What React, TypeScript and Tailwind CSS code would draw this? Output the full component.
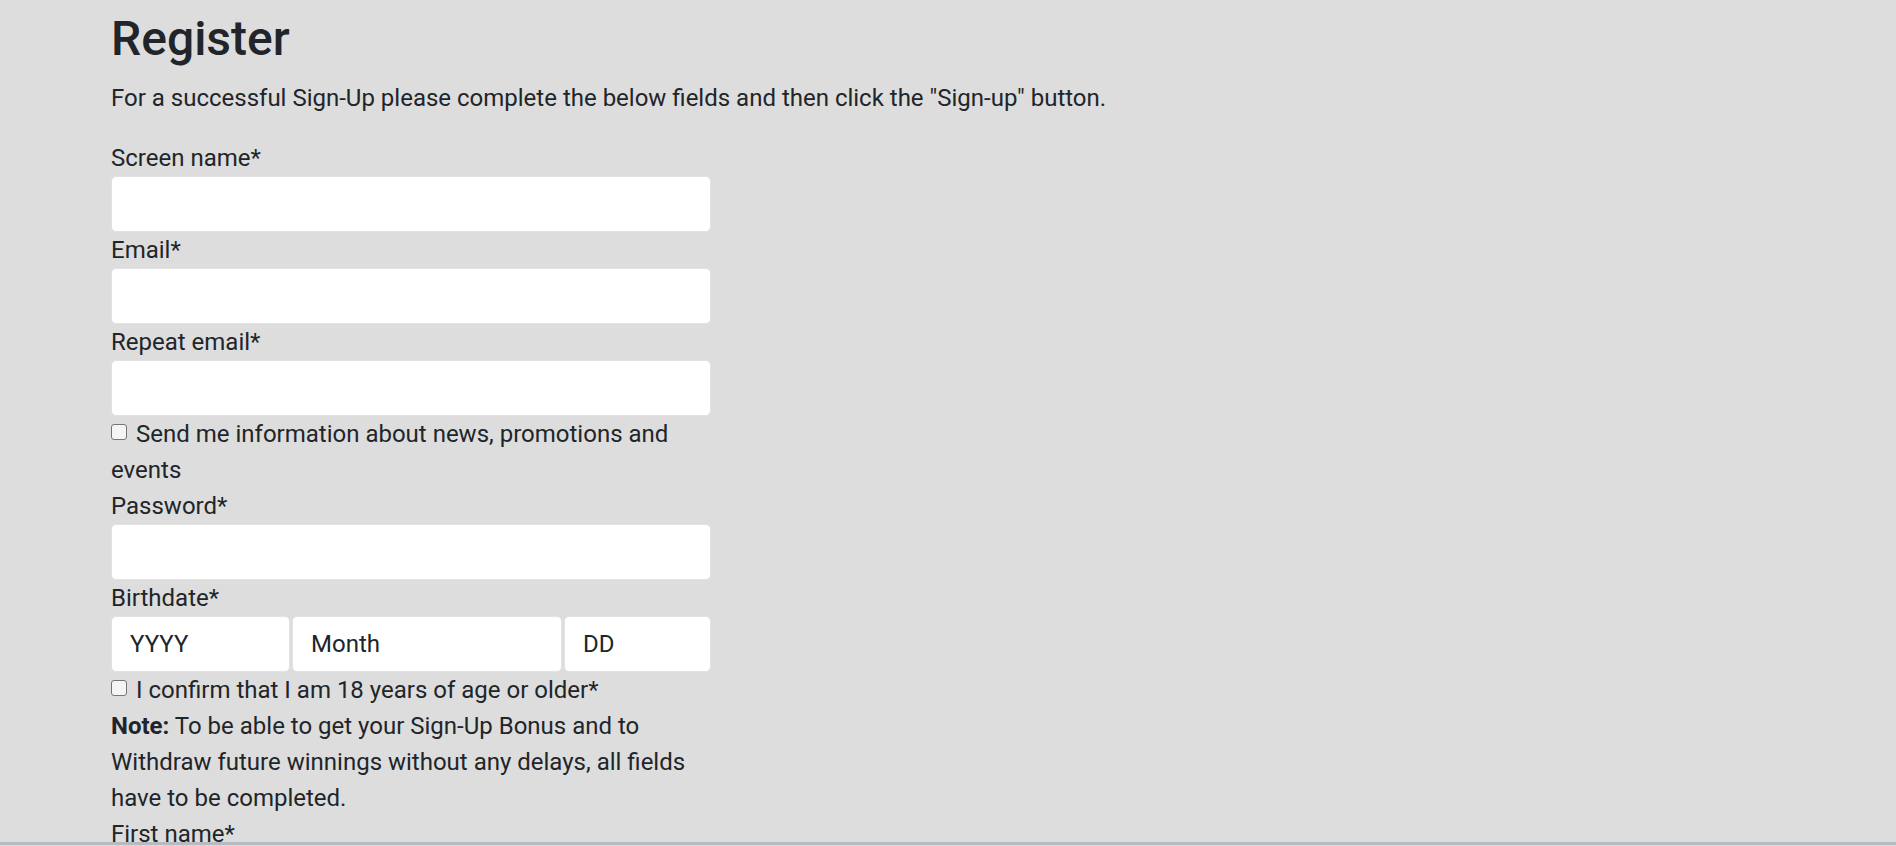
const font = { fontFamily: 'Roboto, "Liberation Sans", sans-serif' }

function Field({ label }: { label: string }) {
  return (
    <div>
      <label className="block leading-[36px]">{label}</label>
      <input
        type="text"
        className="block h-[56px] w-full rounded-[5px] border border-[#e2e2e2] bg-white px-[18px] outline-none"
      />
    </div>
  )
}

function Check({ children }: { children: React.ReactNode }) {
  return (
    <label className="block leading-[36px]">
      <span className="mr-[9px] inline-block h-[16px] w-[16px] rounded-[3px] border border-[#767676] bg-[#f5f5f5] align-[2px]" />
      {children}
    </label>
  )
}

export default function App() {
  return (
    <div style={font} className="relative h-[846px] overflow-hidden bg-[#dddddd] text-[24px] text-[#212529]">
      <div className="pl-[111px] pt-[10px]">
        <h1 className="text-[48px] font-medium leading-[57px]">Register</h1>
        <p className="mt-[13px] leading-[36px]">
          For a successful Sign-Up please complete the below fields and then click the "Sign-up" button.
        </p>
        <form className="mt-[24px] w-[600px]">
          <Field label="Screen name*" />
          <Field label="Email*" />
          <Field label="Repeat email*" />
          <Check>Send me information about news, promotions and events</Check>
          <Field label="Password*" />
          <div>
            <label className="block leading-[36px]">Birthdate*</label>
            <div className="flex gap-[2px]">
              <input
                placeholder="YYYY"
                className="h-[56px] w-[179px] rounded-[5px] border border-[#e2e2e2] bg-white px-[18px] placeholder-[#212529] outline-none"
              />
              <input
                placeholder="Month"
                className="h-[56px] w-[270px] rounded-[5px] border border-[#e2e2e2] bg-white px-[18px] placeholder-[#212529] outline-none"
              />
              <input
                placeholder="DD"
                className="h-[56px] min-w-0 flex-1 rounded-[5px] border border-[#e2e2e2] bg-white px-[18px] placeholder-[#212529] outline-none"
              />
            </div>
          </div>
          <Check>I confirm that I am 18 years of age or older*</Check>
          <p className="leading-[36px]">
            <b className="font-bold">Note:</b> To be able to get your Sign-Up Bonus and to Withdraw future winnings
            without any delays, all fields have to be completed.
          </p>
          <label className="block leading-[36px]">First name*</label>
        </form>
      </div>
      <div className="absolute bottom-0 left-0 right-0 h-[4px] border-t-[3px] border-[#b6bbc1] bg-[#d8dadd]" />
    </div>
  )
}
